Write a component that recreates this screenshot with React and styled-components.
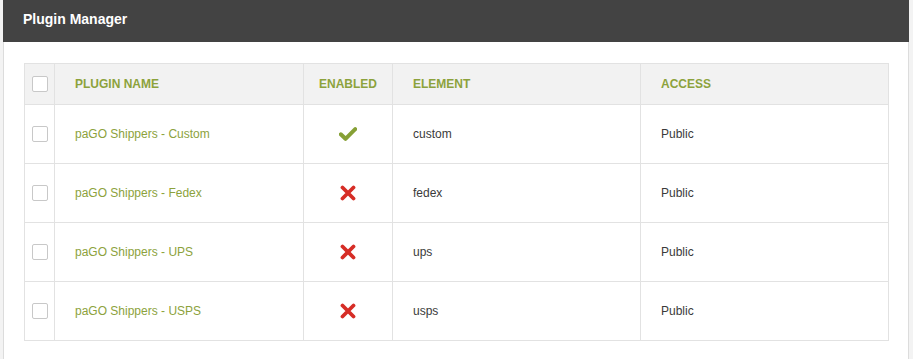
import React from "react";
import styled, { createGlobalStyle } from "styled-components";

const GlobalStyle = createGlobalStyle`
  html, body {
    margin: 0;
    padding: 0;
    background: #f3f3f3;
    font-family: "Liberation Sans", Arial, sans-serif;
  }
`;

const Page = styled.div`
  padding-left: 3px;
  width: 906px;
`;

const Panel = styled.div`
  background: #fff;
  border-left: 1px solid #dcdcdc;
  border-right: 1px solid #dcdcdc;
  height: 359px;
  box-sizing: border-box;
`;

const PanelHeader = styled.div`
  background: #434343;
  height: 42px;
  display: flex;
  align-items: center;
  padding: 0 0 4px 20px;
  box-sizing: border-box;
  margin: 0 -1px;
`;

const Title = styled.h3`
  margin: 0;
  color: #fff;
  font-size: 14px;
  font-weight: 700;
`;

const PanelBody = styled.div`
  padding: 21px 19px 0 20px;
`;

const Table = styled.table`
  width: 100%;
  border-collapse: collapse;
  border: 1px solid #e2e2e2;
  font-size: 12px;
`;

const Th = styled.th`
  background: #f2f2f2;
  color: #8ca23c;
  font-weight: 700;
  text-transform: uppercase;
  text-align: ${(p) => (p.$center ? "center" : "left")};
  height: 41px;
  padding: 0 ${(p) => (p.$center ? "0" : "20px")};
  border: 1px solid #e2e2e2;
  width: ${(p) => p.$w || "auto"};
  box-sizing: border-box;
`;

const Td = styled.td`
  height: 58px;
  padding: 0 ${(p) => (p.$center ? "0" : "20px")};
  text-align: ${(p) => (p.$center ? "center" : "left")};
  border: 1px solid #e2e2e2;
  color: #3a3a3a;
  vertical-align: middle;
`;

const NameLink = styled.span`
  color: #8ca23c;
`;

const Box = styled.span`
  display: inline-block;
  width: 14px;
  height: 14px;
  border: 1px solid #c8c8c8;
  border-radius: 2px;
  background: #fff;
  vertical-align: middle;
`;

const Icon = styled.svg`
  display: inline-block;
  vertical-align: middle;
`;

const Check = () => (
  <Icon width="18" height="14" viewBox="0 0 18 14">
    <path d="M1.8 7.3 L6.5 11.8 L16.2 2.2" fill="none" stroke="#86a035" strokeWidth="4" strokeLinecap="round" strokeLinejoin="round" />
  </Icon>
);

const Cross = () => (
  <Icon width="16" height="16" viewBox="0 0 16 16">
    <path d="M2.5 2.5 L13.5 13.5 M13.5 2.5 L2.5 13.5" fill="none" stroke="#d62d26" strokeWidth="3.8" strokeLinecap="round" />
  </Icon>
);

const plugins = [
  { name: "paGO Shippers - Custom", enabled: true, element: "custom", access: "Public" },
  { name: "paGO Shippers - Fedex", enabled: false, element: "fedex", access: "Public" },
  { name: "paGO Shippers - UPS", enabled: false, element: "ups", access: "Public" },
  { name: "paGO Shippers - USPS", enabled: false, element: "usps", access: "Public" },
];

export default function App() {
  return (
    <>
      <GlobalStyle />
      <Page>
        <Panel>
          <PanelHeader>
            <Title>Plugin Manager</Title>
          </PanelHeader>
          <PanelBody>
            <Table>
              <thead>
                <tr>
                  <Th $center $w="30px">
                    <Box />
                  </Th>
                  <Th $w="249px">Plugin Name</Th>
                  <Th $center $w="89px">Enabled</Th>
                  <Th $w="248px">Element</Th>
                  <Th>Access</Th>
                </tr>
              </thead>
              <tbody>
                {plugins.map((p) => (
                  <tr key={p.element}>
                    <Td $center>
                      <Box />
                    </Td>
                    <Td>
                      <NameLink>{p.name}</NameLink>
                    </Td>
                    <Td $center>{p.enabled ? <Check /> : <Cross />}</Td>
                    <Td>{p.element}</Td>
                    <Td>{p.access}</Td>
                  </tr>
                ))}
              </tbody>
            </Table>
          </PanelBody>
        </Panel>
      </Page>
    </>
  );
}
